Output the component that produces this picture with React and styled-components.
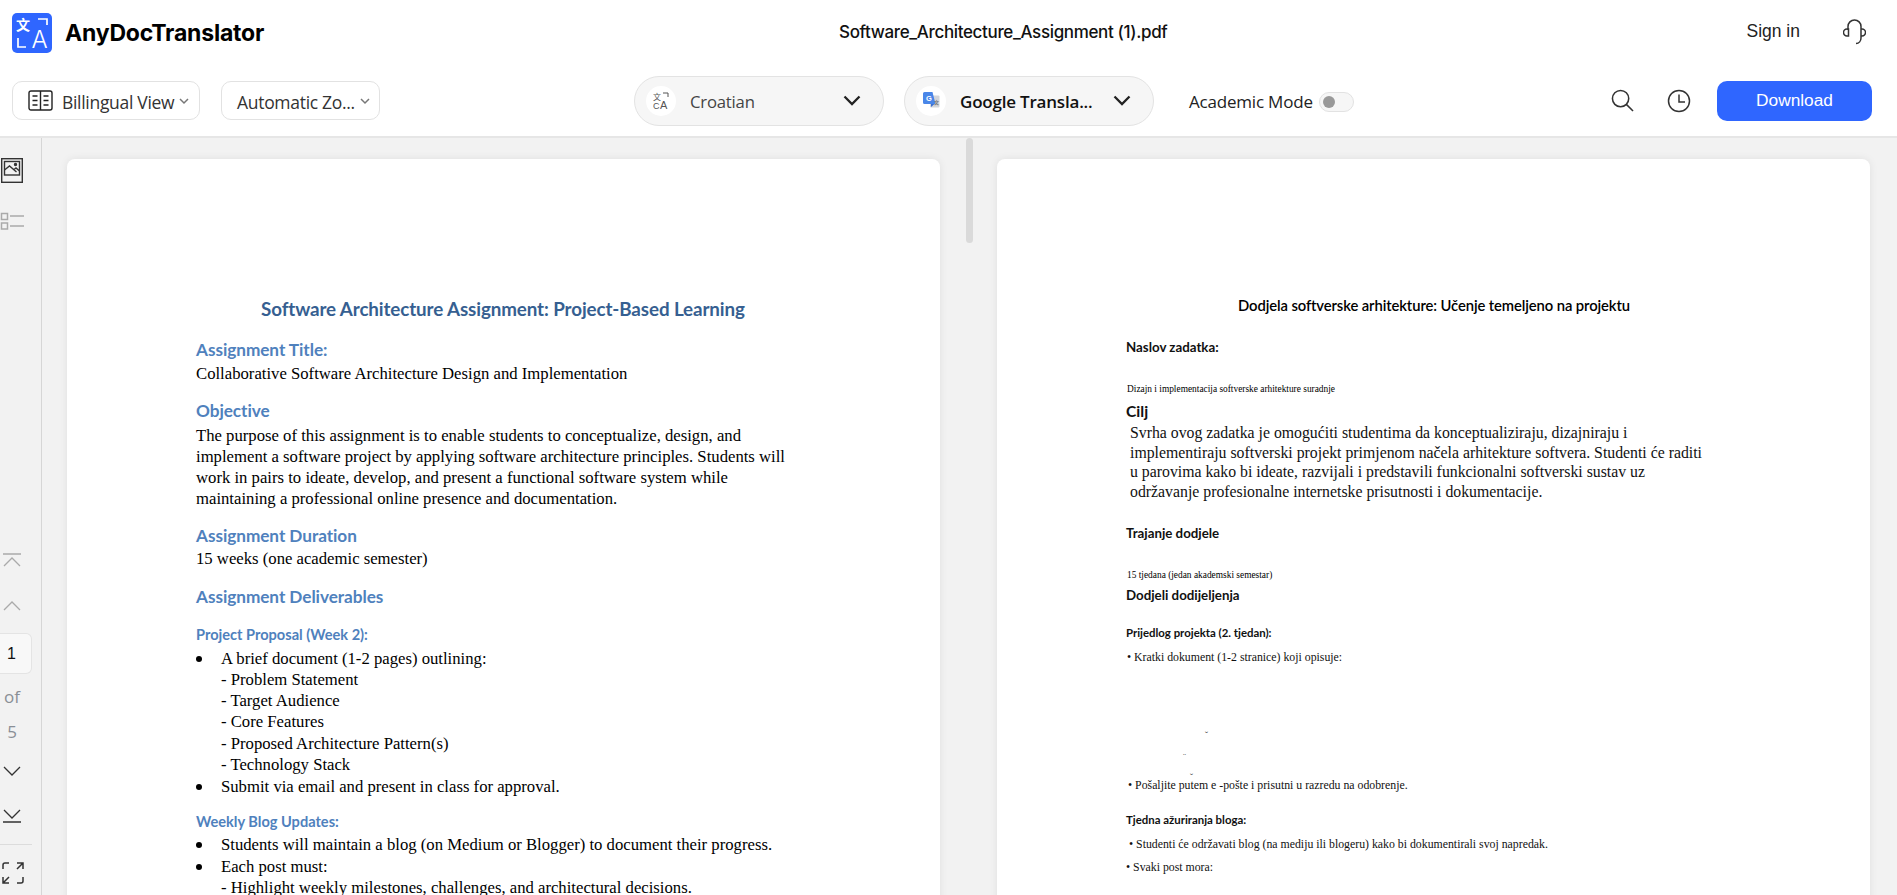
import React from "react";
import styled, { createGlobalStyle } from "styled-components";

const GlobalStyle = createGlobalStyle`
  html, body {
    margin: 0;
    height: 100%;
    overflow: hidden;
    background: #f2f2f2;
    font-family: "Liberation Sans", Arial, sans-serif;
    color: #111;
  }
  * { box-sizing: border-box; }
`;

const Shell = styled.div`
  width: 1897px;
  height: 895px;
  display: flex;
  flex-direction: column;
  overflow: hidden;
`;

const Header = styled.header`
  height: 138px;
  flex: none;
  background: #fff;
  border-bottom: 2px solid #e6e6e6;
`;

const TopRow = styled.div`
  height: 65px;
  padding: 0 31px 0 12px;
  display: grid;
  grid-template-columns: 827px auto 1fr;
  align-items: center;
`;

const Brand = styled.div`
  display: flex;
  align-items: center;
  gap: 13px;
  font-size: 23px;
  font-weight: 700;
  color: #000;
  font-family: "Inter", sans-serif;
  letter-spacing: -0.2px;
`;

const FileName = styled.div`
  padding-bottom: 2px;
  font-family: "Inter", sans-serif;
  font-size: 17px;
  font-weight: 500;
  color: #111;
  letter-spacing: -0.35px;
`;

const Account = styled.div`
  display: flex;
  align-items: center;
  justify-content: flex-end;
  gap: 43px;
  padding-bottom: 2px;
  font-size: 17.5px;
  color: #222;
`;

const ToolRow = styled.div`
  height: 71px;
  padding: 0 25px 0 12px;
  display: flex;
  align-items: center;
  position: relative;
`;

const Select = styled.div`
  height: 39px;
  width: ${(p) => p.$w}px;
  margin-right: ${(p) => p.$mr || 0}px;
  border: 1px solid #e2e2e2;
  border-radius: 10px;
  display: flex;
  align-items: center;
  padding-left: ${(p) => p.$pl}px;
  padding-top: 2px;
  gap: 5px;
  font-family: "Open Sans", sans-serif;
  font-size: 17.5px;
  letter-spacing: -0.3px;
  color: #333;
  white-space: nowrap;
`;

const ViewIcon = styled.span`
  display: flex;
  margin: -2px 4px 0 0;
`;

const Pill = styled.div`
  height: 50px;
  width: 250px;
  margin-right: ${(p) => p.$mr || 0}px;
  border: 1px solid #e3e3e3;
  border-radius: 25px;
  background: #f6f6f6;
  display: flex;
  align-items: center;
  padding: 0 22px 0 11px;
  font-family: "Open Sans", sans-serif;
  font-size: ${(p) => (p.$strong ? 17 : 16.7)}px;
  letter-spacing: -0.2px;
  color: ${(p) => (p.$strong ? "#111" : "#444")};
  font-weight: ${(p) => (p.$strong ? 600 : 400)};
`;

const PillIcon = styled.span`
  width: 30px;
  height: 30px;
  border-radius: 50%;
  background: #fff;
  display: flex;
  align-items: center;
  justify-content: center;
  margin-right: ${(p) => p.$gap}px;
  flex: none;
`;

const PillLabel = styled.span`
  flex: 1;
  padding-top: 2px;
  white-space: nowrap;
`;

const Academic = styled.div`
  display: flex;
  align-items: center;
  gap: 6px;
  margin-left: -1px;
  padding-top: 2px;
  font-family: "Open Sans", sans-serif;
  font-size: 17px;
  letter-spacing: -0.2px;
  color: #222;
`;

const Toggle = styled.span`
  width: 35px;
  height: 20px;
  border: 1px solid #e2e2e2;
  border-radius: 10px;
  background: #f6f6f6;
  display: flex;
  align-items: center;
  padding-left: 3px;
  &::before {
    content: "";
    width: 12px;
    height: 12px;
    border-radius: 50%;
    background: #999;
  }
`;

const ToolRight = styled.div`
  margin-left: auto;
  display: flex;
  align-items: center;
  gap: 33px;
`;

const Download = styled.button`
  width: 155px;
  height: 40px;
  margin-left: -7px;
  border: 0;
  border-radius: 10px;
  background: #2f66ff;
  color: #fff;
  font-family: "Liberation Sans", Arial, sans-serif;
  font-size: 17.3px;
`;

const Body = styled.div`
  flex: 1;
  display: flex;
  min-height: 0;
`;

const Side = styled.aside`
  width: 42px;
  flex: none;
  border-right: 1px solid #d6d6d6;
  background: #f2f2f2;
  padding-top: 20px;
  display: flex;
  flex-direction: column;
`;

const SideIcon = styled.span`
  display: flex;
  width: 24px;
  margin-left: ${(p) => p.$ml || 0}px;
  margin-top: ${(p) => p.$mt || 0}px;
`;

const PageBox = styled.div`
  width: 32px;
  height: 41px;
  margin-top: 22px;
  background: #f8f8f8;
  border: 1px solid #e4e4e4;
  border-left: 0;
  border-radius: 0 6px 6px 0;
  display: flex;
  align-items: center;
  justify-content: center;
  padding-right: 8px;
  font-size: 16px;
  color: #111;
`;

const PageNote = styled.div`
  width: 24px;
  text-align: center;
  margin-top: ${(p) => p.$mt}px;
  font-family: "Open Sans", sans-serif;
  font-size: 17px;
  line-height: 24px;
  color: #8a8f96;
`;

const SideRule = styled.div`
  width: 32px;
  height: 1px;
  background: #dcdcdc;
  margin-top: 21px;
`;

const Viewer = styled.main`
  flex: 1;
  position: relative;
  display: flex;
  padding-top: 21px;
  padding-left: 25px;
  overflow: hidden;
`;

const Thumb = styled.div`
  position: absolute;
  left: 924px;
  top: 0;
  width: 7px;
  height: 105px;
  border-radius: 4px;
  background: #dadada;
`;

const Page = styled.article`
  width: ${(p) => p.$w}px;
  margin-left: ${(p) => p.$ml || 0}px;
  flex: none;
  height: 900px;
  background: #fff;
  border-radius: 8px;
  box-shadow: 0 0 8px rgba(0, 0, 0, 0.08);
  padding-left: ${(p) => p.$pl}px;
`;

/* source page: Cambria body, Calibri headings */
const Title = styled.h1`
  margin: ${(p) => p.$mt}px 0 0;
  font: 700 18.8px/24px "Lato", sans-serif;
  color: #365f91;
  letter-spacing: -0.1px;
  width: 549px;
  padding-left: 65px;
`;

const H2 = styled.h2`
  margin: ${(p) => p.$mt}px 0 0;
  font: 700 17.2px/20px "Lato", sans-serif;
  color: #4f81bd;
  letter-spacing: -0.05px;
`;

const H3 = styled.h3`
  margin: ${(p) => p.$mt}px 0 0;
  font: 700 14.6px/20px "Lato", sans-serif;
  color: #4f81bd;
`;

const Para = styled.p`
  margin: ${(p) => p.$mt || 0}px 0 0;
  font: 400 16.7px/21px "Liberation Serif", serif;
  color: #000;
  white-space: nowrap;
`;

const Bullet = styled(Para)`
  position: relative;
  padding-left: 25px;
  &::before {
    content: "";
    position: absolute;
    left: 0;
    top: 8px;
    width: 6px;
    height: 6px;
    border-radius: 50%;
    background: #000;
  }
`;

const Sub = styled(Para)`
  padding-left: 25px;
`;

const TrTitle = styled.h1`
  margin: ${(p) => p.$mt}px 0 0 112px;
  font: 600 14.8px/20px "Lato", sans-serif;
  color: #000;
  letter-spacing: -0.1px;
  white-space: nowrap;
`;

const TrHead = styled.h2`
  margin: ${(p) => p.$mt}px 0 0;
  font: 700 ${(p) => p.$fs || 13.3}px/20px "Lato", sans-serif;
  color: #111;
`;

const TrTiny = styled.p`
  margin: ${(p) => p.$mt}px 0 0 1px;
  font: 400 9.4px/12px "Liberation Serif", serif;
  color: #000;
  white-space: nowrap;
`;

const TrBody = styled.p`
  margin: ${(p) => p.$mt || 0}px 0 0 4px;
  font: 400 15.8px/19.7px "Liberation Serif", serif;
  color: #111;
  white-space: nowrap;
`;

const TrLine = styled.p`
  margin: ${(p) => p.$mt}px 0 0 ${(p) => p.$ml || 0}px;
  font: 400 11.8px/16px "Liberation Serif", serif;
  color: #111;
  white-space: nowrap;
`;

const Speck = styled.span`
  display: block;
  margin: ${(p) => p.$mt}px 0 0 ${(p) => p.$ml}px;
  font: 400 9px/12px "Liberation Serif", serif;
  height: 9px;
  color: #444;
`;

const LogoMark = () => (
  <svg width="40" height="40" viewBox="0 0 40 40" aria-hidden="true">
    <rect width="40" height="40" rx="5" fill="#2f66ff" />
    <text x="4" y="17" fontFamily="Noto Sans CJK SC" fontSize="14" fill="#fff">
      文
    </text>
    <text x="19.5" y="35" fontFamily="Inter" fontWeight="300" fontSize="24" fill="#fff">
      A
    </text>
    <path d="M26 6h9v6M6 25v9h8" fill="none" stroke="#fff" strokeWidth="1.7" />
  </svg>
);

const Headset = () => (
  <svg width="23" height="27" viewBox="0 0 23 27" fill="none" stroke="#333" strokeWidth="1.5" aria-hidden="true">
    <path d="M5 12V8.5a6.5 6.5 0 0 1 13 0V20c0 3-2 5.5-5 5.5" />
    <path d="M5 11H4a2.5 2.5 0 0 0 0 7h1.5V11zM18 11h1a2.5 2.5 0 0 1 0 7h-1" />
  </svg>
);

const BookIcon = () => (
  <svg width="25" height="21" viewBox="0 0 25 21" fill="none" stroke="#222" strokeWidth="1.4" aria-hidden="true">
    <rect x="1" y="1" width="23" height="19" rx="2" />
    <path d="M12.5 1v19M4.5 6h5M4.5 10.5h5M4.5 15h5M15.5 6h5M15.5 10.5h5M15.5 15h5" />
  </svg>
);

const SmallCaret = () => (
  <svg width="10" height="7" viewBox="0 0 10 7" fill="none" stroke="#777" strokeWidth="1.5" aria-hidden="true">
    <path d="M1 1l4 4 4-4" />
  </svg>
);

const BigCaret = () => (
  <svg width="18" height="11" viewBox="0 0 18 11" fill="none" stroke="#222" strokeWidth="2.3" aria-hidden="true">
    <path d="M1.5 1.5L9 9l7.5-7.5" />
  </svg>
);

const TranslateGlyph = () => (
  <svg width="16" height="18" viewBox="0 0 16 18" aria-hidden="true">
    <text x="0" y="8" fontFamily="Noto Sans CJK SC" fontSize="8" fill="#555">
      文
    </text>
    <path d="M10 1h5v4" fill="none" stroke="#555" strokeWidth="1" />
    <text x="0" y="17" fontFamily="Liberation Sans" fontSize="9" fill="#555">
      C
    </text>
    <text x="7" y="17" fontFamily="Liberation Sans" fontSize="11" fill="#555">
      A
    </text>
  </svg>
);

const GoogleGlyph = () => (
  <svg width="17" height="17" viewBox="0 0 17 17" aria-hidden="true">
    <rect x="7" y="3.5" width="9.5" height="12" rx="1" fill="#d3d5da" />
    <path d="M1.5 0h8l3 12H1.5A1.5 1.5 0 0 1 0 10.5v-9A1.5 1.5 0 0 1 1.5 0z" fill="#4a86e8" />
    <path d="M8 12h3.5L8 15z" fill="#3b6fd0" />
    <text x="3" y="9" fontFamily="Liberation Sans" fontWeight="700" fontSize="7.5" fill="#fff">
      G
    </text>
    <text x="11" y="12" fontFamily="Noto Sans CJK SC" fontSize="5" fill="#777">
      文
    </text>
  </svg>
);

const SearchIcon = () => (
  <svg width="23" height="23" viewBox="0 0 24 24" fill="none" stroke="#333" strokeWidth="1.6" aria-hidden="true">
    <circle cx="10" cy="10" r="8.5" />
    <path d="M16 16l7 7" />
  </svg>
);

const ClockIcon = () => (
  <svg width="24" height="24" viewBox="0 0 24 24" fill="none" stroke="#333" strokeWidth="1.5" aria-hidden="true">
    <circle cx="12" cy="12" r="10.5" />
    <path d="M12 5.5v7.5h6" />
  </svg>
);

const ImageIcon = () => (
  <svg width="22" height="25" viewBox="0 0 22 25" fill="none" stroke="#333" strokeWidth="1.4" aria-hidden="true">
    <rect x="0.7" y="0.7" width="20.6" height="23.6" />
    <rect x="3.5" y="3.5" width="15" height="13.5" />
    <path d="M3.5 12l5-4 7 6M13 11.5l2-1.5 3.5 3" />
    <circle cx="14.5" cy="6.5" r="1" fill="#333" />
  </svg>
);

const OutlineIcon = () => (
  <svg width="24" height="18" viewBox="0 0 24 18" fill="none" stroke="#aaa" strokeWidth="1.5" aria-hidden="true">
    <rect x="1.5" y="1.5" width="6" height="6" />
    <rect x="1.5" y="11" width="6" height="6" />
    <path d="M10 4h14M10 14h14" />
  </svg>
);

const Chevron = ({ d, c, bar }) => (
  <svg width="18" height={bar ? 14 : 10} viewBox={`0 0 18 ${bar ? 14 : 10}`} fill="none" stroke={c} strokeWidth="1.3" aria-hidden="true">
    <path d={d} />
  </svg>
);

const FullscreenIcon = () => (
  <svg width="22" height="22" viewBox="0 0 22 22" fill="none" stroke="#333" strokeWidth="1.5" aria-hidden="true">
    <path d="M1 7V3a2 2 0 0 1 2-2h4M15 1h6v6M21 1l-6 6M1 21l6-6M1 15v6h6M21 15v4a2 2 0 0 1-2 2h-4" />
  </svg>
);

export default function App() {
  return (
    <Shell>
      <GlobalStyle />
      <Header>
        <TopRow>
          <Brand>
            <LogoMark />
            AnyDocTranslator
          </Brand>
          <FileName>Software_Architecture_Assignment (1).pdf</FileName>
          <Account>
            <span>Sign in</span>
            <Headset />
          </Account>
        </TopRow>
        <ToolRow>
          <Select $w={188} $pl={15} $mr={21}>
            <ViewIcon>
              <BookIcon />
            </ViewIcon>
            Billingual View
            <SmallCaret />
          </Select>
          <Select $w={159} $pl={15} $mr={254}>
            Automatic Zo...
            <SmallCaret />
          </Select>
          <Pill $mr={20}>
            <PillIcon $gap={14}>
              <TranslateGlyph />
            </PillIcon>
            <PillLabel>Croatian</PillLabel>
            <BigCaret />
          </Pill>
          <Pill $strong $mr={36}>
            <PillIcon $gap={14}>
              <GoogleGlyph />
            </PillIcon>
            <PillLabel>Google Transla...</PillLabel>
            <BigCaret />
          </Pill>
          <Academic>
            Academic Mode
            <Toggle />
          </Academic>
          <ToolRight>
            <SearchIcon />
            <ClockIcon />
            <Download>Download</Download>
          </ToolRight>
        </ToolRow>
      </Header>
      <Body>
        <Side>
          <SideIcon $ml={1}>
            <ImageIcon />
          </SideIcon>
          <SideIcon $mt={29} $ml={0}>
            <OutlineIcon />
          </SideIcon>
          <SideIcon $mt={323} $ml={3}>
            <Chevron bar c="#aaa" d="M0 1h18M1 13l8-8 8 8" />
          </SideIcon>
          <SideIcon $mt={34} $ml={3}>
            <Chevron c="#aaa" d="M1 9l8-8 8 8" />
          </SideIcon>
          <PageBox>1</PageBox>
          <PageNote $mt={11}>of</PageNote>
          <PageNote $mt={11}>5</PageNote>
          <SideIcon $mt={22} $ml={3}>
            <Chevron c="#333" d="M1 1l8 8 8-8" />
          </SideIcon>
          <SideIcon $mt={33} $ml={3}>
            <Chevron bar c="#333" d="M1 1l8 8 8-8M0 13h18" />
          </SideIcon>
          <SideRule />
          <SideIcon $mt={17} $ml={2}>
            <FullscreenIcon />
          </SideIcon>
        </Side>
        <Viewer>
          <Thumb />
          <Page $w={873} $pl={129}>
            <Title $mt={138}>Software Architecture Assignment: Project-Based Learning</Title>
            <H2 $mt={19}>Assignment Title:</H2>
            <Para $mt={3}>Collaborative Software Architecture Design and Implementation</Para>
            <H2 $mt={17}>Objective</H2>
            <Para $mt={4}>The purpose of this assignment is to enable students to conceptualize, design, and</Para>
            <Para>implement a software project by applying software architecture principles. Students will</Para>
            <Para>work in pairs to ideate, develop, and present a functional software system while</Para>
            <Para>maintaining a professional online presence and documentation.</Para>
            <H2 $mt={17}>Assignment Duration</H2>
            <Para $mt={2}>15 weeks (one academic semester)</Para>
            <H2 $mt={18}>Assignment Deliverables</H2>
            <H3 $mt={18}>Project Proposal (Week 2):</H3>
            <Bullet $mt={3}>A brief document (1-2 pages) outlining:</Bullet>
            <Sub>- Problem Statement</Sub>
            <Sub>- Target Audience</Sub>
            <Sub>- Core Features</Sub>
            <Sub $mt={1}>- Proposed Architecture Pattern(s)</Sub>
            <Sub>- Technology Stack</Sub>
            <Bullet $mt={1}>Submit via email and present in class for approval.</Bullet>
            <H3 $mt={15}>Weekly Blog Updates:</H3>
            <Bullet $mt={2}>Students will maintain a blog (on Medium or Blogger) to document their progress.</Bullet>
            <Bullet $mt={1}>Each post must:</Bullet>
            <Sub>- Highlight weekly milestones, challenges, and architectural decisions.</Sub>
          </Page>
          <Page $w={873} $ml={57} $pl={129}>
            <TrTitle $mt={136}>Dodjela softverske arhitekture: Učenje temeljeno na projektu</TrTitle>
            <TrHead $mt={22}>Naslov zadatka:</TrHead>
            <TrTiny $mt={26}>Dizajn i implementacija softverske arhitekture suradnje</TrTiny>
            <TrHead $mt={6} $fs={15.6}>Cilj</TrHead>
            <TrBody $mt={2}>Svrha ovog zadatka je omogućiti studentima da konceptualiziraju, dizajniraju i</TrBody>
            <TrBody>implementiraju softverski projekt primjenom načela arhitekture softvera. Studenti će raditi</TrBody>
            <TrBody>u parovima kako bi ideate, razvijali i predstavili funkcionalni softverski sustav uz</TrBody>
            <TrBody>održavanje profesionalne internetske prisutnosti i dokumentacije.</TrBody>
            <TrHead $mt={21}>Trajanje dodjele</TrHead>
            <TrTiny $mt={26}>15 tjedana (jedan akademski semestar)</TrTiny>
            <TrHead $mt={4}>Dodjeli dodijeljenja</TrHead>
            <TrHead $mt={18} $fs={11.4}>Prijedlog projekta (2. tjedan):</TrHead>
            <TrLine $mt={6} $ml={1}>• Kratki dokument (1-2 stranice) koji opisuje:</TrLine>
            <Speck $mt={64} $ml={79}>ˇ</Speck>
            <Speck $mt={12} $ml={57}>¨</Speck>
            <Speck $mt={12} $ml={64}>ˇ</Speck>
            <TrLine $mt={-3} $ml={2}>• Pošaljite putem e -pošte i prisutni u razredu na odobrenje.</TrLine>
            <TrHead $mt={17} $fs={11.4}>Tjedna ažuriranja bloga:</TrHead>
            <TrLine $mt={6} $ml={3}>• Studenti će održavati blog (na mediju ili blogeru) kako bi dokumentirali svoj napredak.</TrLine>
            <TrLine $mt={7}>• Svaki post mora:</TrLine>
          </Page>
        </Viewer>
      </Body>
    </Shell>
  );
}
